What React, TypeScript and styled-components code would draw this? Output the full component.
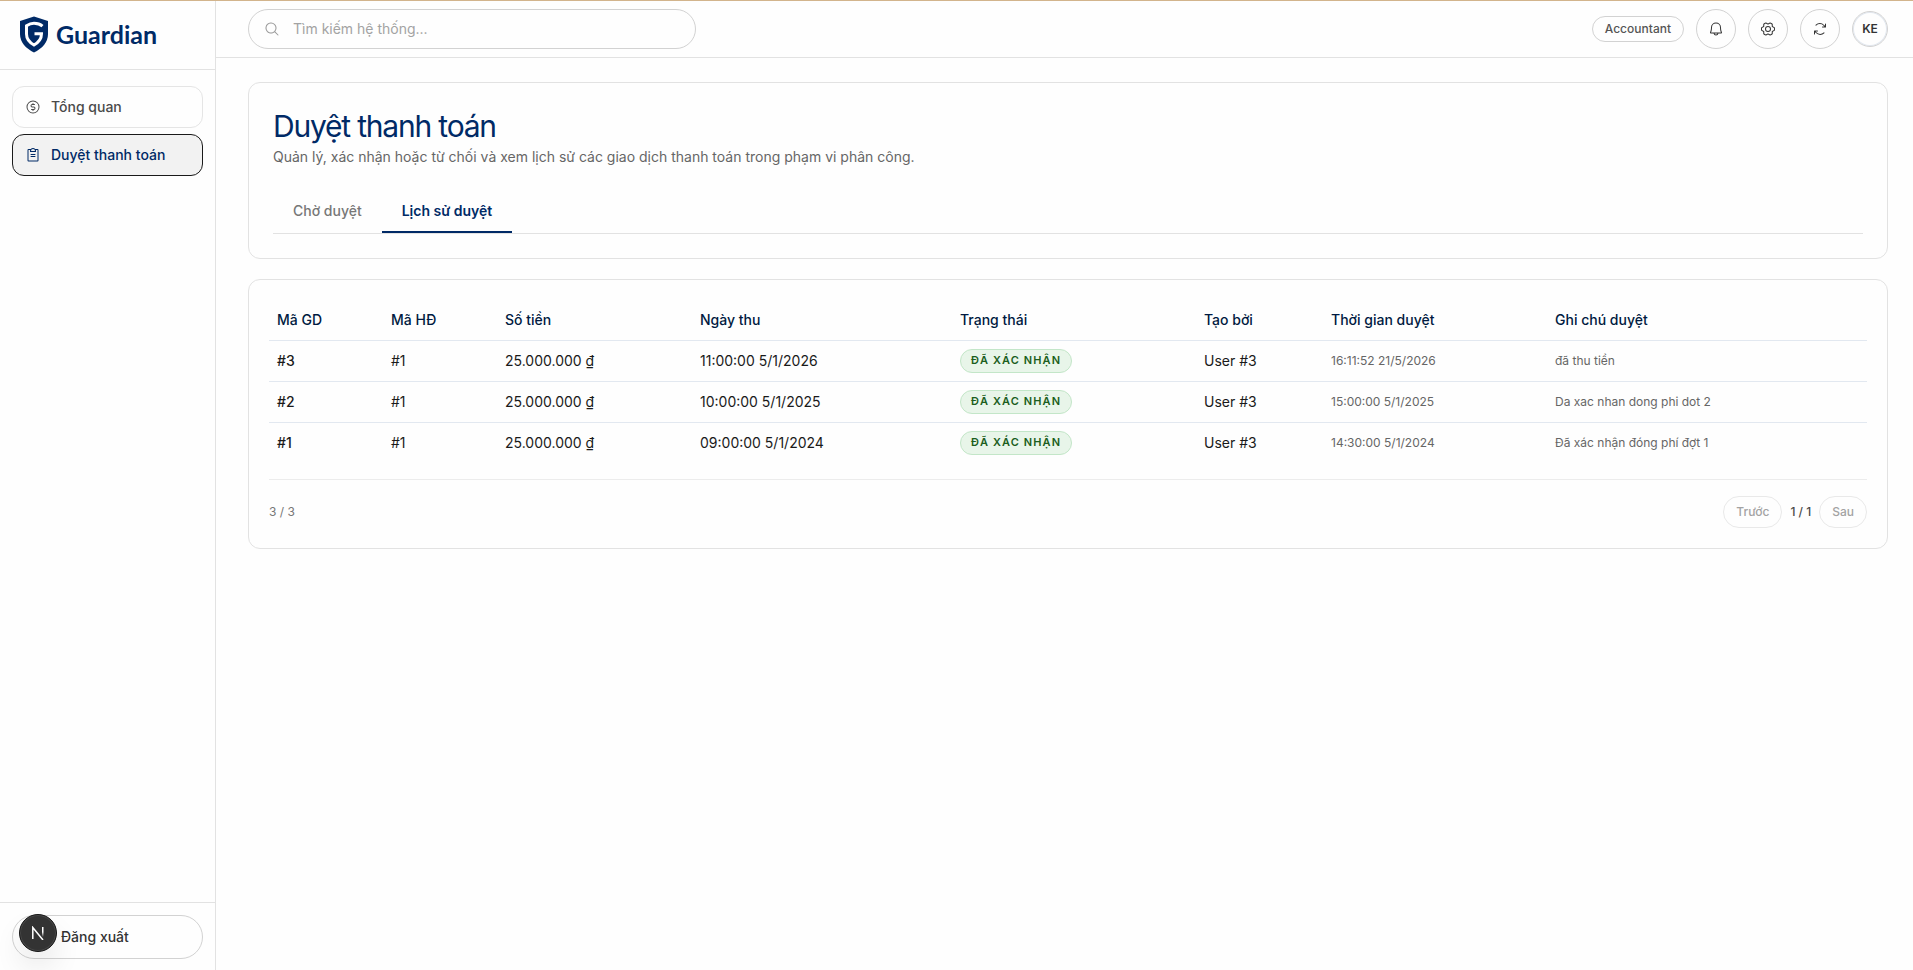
import React from "react";
import styled, { createGlobalStyle, css } from "styled-components";
import {
  PiArrowsClockwise,
  PiBell,
  PiClipboardText,
  PiCurrencyCircleDollar,
  PiGearSix,
  PiMagnifyingGlass,
} from "react-icons/pi";

interface ITransaction {
  id: string;
  contract: string;
  amount: string;
  collectedAt: string;
  status: string;
  createdBy: string;
  reviewedAt: string;
  note: string;
}

const COLUMNS = [
  { label: "Mã GD", width: 114 },
  { label: "Mã HĐ", width: 114 },
  { label: "Số tiền", width: 195 },
  { label: "Ngày thu", width: 260 },
  { label: "Trạng thái", width: 244 },
  { label: "Tạo bởi", width: 127 },
  { label: "Thời gian duyệt", width: 224 },
  { label: "Ghi chú duyệt", width: 320 },
];

const TRANSACTIONS: ITransaction[] = [
  {
    id: "#3",
    contract: "#1",
    amount: "25.000.000 ₫",
    collectedAt: "11:00:00 5/1/2026",
    status: "Đã xác nhận",
    createdBy: "User #3",
    reviewedAt: "16:11:52 21/5/2026",
    note: "đã thu tiền",
  },
  {
    id: "#2",
    contract: "#1",
    amount: "25.000.000 ₫",
    collectedAt: "10:00:00 5/1/2025",
    status: "Đã xác nhận",
    createdBy: "User #3",
    reviewedAt: "15:00:00 5/1/2025",
    note: "Da xac nhan dong phi dot 2",
  },
  {
    id: "#1",
    contract: "#1",
    amount: "25.000.000 ₫",
    collectedAt: "09:00:00 5/1/2024",
    status: "Đã xác nhận",
    createdBy: "User #3",
    reviewedAt: "14:30:00 5/1/2024",
    note: "Đã xác nhận đóng phí đợt 1",
  },
];

const ShieldLogo = () => (
  <svg width="30" height="37" viewBox="0 0 30 37" fill="none">
    <path
      d="M15 0.5 L29 5 V18 C29 26.5 23 32.500 15 36.500 C7 32.500 1 26.500 1 18 V5 Z"
      fill="#002a66"
    />
    <path
      d="M23.500 10.200 C21 8 18 7.300 15 7.300 C11.500 7.300 9.500 8.500 7.500 9.800 V18 C7.500 23.500 10.500 26.500 15 29 C19.500 26.500 22.500 23.500 22.500 17.800 H15.500"
      stroke="#fff"
      strokeWidth="3"
    />
  </svg>
);

const NextMark = () => (
  <svg width="14" height="14" viewBox="0 0 14 14" fill="none">
    <defs>
      <linearGradient id="stem" x1="0" y1="0" x2="0" y2="1">
        <stop offset="0.5" stopColor="#fff" />
        <stop offset="1" stopColor="#fff" stopOpacity="0" />
      </linearGradient>
    </defs>
    <path d="M1.800 13 V1.500 L12 14" stroke="#fff" strokeWidth="1.500" />
    <rect x="11" y="1" width="1.500" height="10" fill="url(#stem)" />
  </svg>
);

export const App = () => {
  return (
    <>
      <GlobalStyle />
      <Shell>
        <Sidebar>
          <Brand>
            <ShieldLogo />
            <BrandName>Guardian</BrandName>
          </Brand>
          <Nav>
            <NavItem>
              <PiCurrencyCircleDollar size={16} />
              Tổng quan
            </NavItem>
            <NavItem $active>
              <PiClipboardText size={16} />
              Duyệt thanh toán
            </NavItem>
          </Nav>
          <SidebarFooter>
            <LogoutButton>Đăng xuất</LogoutButton>
            <DevBadge>
              <NextMark />
            </DevBadge>
          </SidebarFooter>
        </Sidebar>
        <Main>
          <TopBar>
            <SearchBox>
              <PiMagnifyingGlass size={16} />
              <SearchInput placeholder="Tìm kiếm hệ thống..." />
            </SearchBox>
            <Actions>
              <RoleTag>Accountant</RoleTag>
              <IconButton>
                <PiBell size={16} />
              </IconButton>
              <IconButton>
                <PiGearSix size={16} />
              </IconButton>
              <IconButton>
                <PiArrowsClockwise size={16} />
              </IconButton>
              <Avatar>KE</Avatar>
            </Actions>
          </TopBar>
          <Content>
            <HeaderCard>
              <Title>Duyệt thanh toán</Title>
              <Subtitle>
                Quản lý, xác nhận hoặc từ chối và xem lịch sử các giao dịch
                thanh toán trong phạm vi phân công.
              </Subtitle>
              <Tabs>
                <Tab>Chờ duyệt</Tab>
                <Tab $active>Lịch sử duyệt</Tab>
              </Tabs>
            </HeaderCard>
            <TableCard>
              <Table>
                <colgroup>
                  {COLUMNS.map(column => (
                    <Col key={column.label} $width={column.width} />
                  ))}
                </colgroup>
                <thead>
                  <Row>
                    {COLUMNS.map(column => (
                      <HeadCell key={column.label}>{column.label}</HeadCell>
                    ))}
                  </Row>
                </thead>
                <tbody>
                  {TRANSACTIONS.map(item => (
                    <Row key={item.id}>
                      <Cell $strong>{item.id}</Cell>
                      <Cell>{item.contract}</Cell>
                      <Cell>{item.amount}</Cell>
                      <Cell>{item.collectedAt}</Cell>
                      <Cell>
                        <StatusBadge>{item.status}</StatusBadge>
                      </Cell>
                      <Cell>{item.createdBy}</Cell>
                      <Cell $muted>{item.reviewedAt}</Cell>
                      <Cell $muted>{item.note}</Cell>
                    </Row>
                  ))}
                </tbody>
              </Table>
              <TableFooter>
                <span>3 / 3</span>
                <Pager>
                  <PageButton disabled>Trước</PageButton>
                  <PageInfo>1 / 1</PageInfo>
                  <PageButton disabled>Sau</PageButton>
                </Pager>
              </TableFooter>
            </TableCard>
          </Content>
        </Main>
      </Shell>
    </>
  );
};

export default App;

const GlobalStyle = createGlobalStyle`
  * {
    box-sizing: border-box;
  }
  body {
    margin: 0;
    background: #fefefe;
    color: #1a1a1a;
    font-family: Inter, "Noto Sans", sans-serif;
    font-size: 14px;
    line-height: 20px;
  }
  button, input {
    font: inherit;
  }
`;

const Shell = styled.div`
  display: flex;
  height: 100vh;
  border-top: 1px solid #d2b48c;
`;

const Sidebar = styled.aside`
  display: flex;
  flex-direction: column;
  width: 216px;
  flex-shrink: 0;
  border-right: 1px solid #e2e2e2;
`;

const Brand = styled.div`
  display: flex;
  align-items: center;
  gap: 7px;
  height: 69px;
  padding: 0 0 2px 19px;
  border-bottom: 1px solid #e2e2e2;
`;

const BrandName = styled.span`
  color: #002a66;
  font-family: Lato, sans-serif;
  font-size: 25px;
  font-weight: 700;
  line-height: 30px;
`;

const Nav = styled.nav`
  display: flex;
  flex: 1;
  flex-direction: column;
  gap: 6px;
  padding: 16px 12px;
`;

const NavItem = styled.a<{ $active?: boolean }>`
  display: flex;
  align-items: center;
  gap: 10px;
  height: 42px;
  padding: 0 12px;
  border: 1px solid #e5e5e5;
  border-radius: 12px;
  color: #4a4a4a;
  font-weight: 500;
  ${props =>
    props.$active &&
    css`
      border-color: #1a1a1a;
      background: #f2f2f2;
      color: #002a66;
    `}
`;

const SidebarFooter = styled.div`
  position: relative;
  padding: 12px 12px 11px;
  border-top: 1px solid #e2e2e2;
`;

const LogoutButton = styled.button`
  display: flex;
  align-items: center;
  width: 100%;
  height: 44px;
  padding: 0 48px;
  border: 1px solid #d2d2d2;
  border-radius: 22px;
  background: #fefefe;
  color: #333;
  font-weight: 500;
`;

const DevBadge = styled.div`
  position: absolute;
  left: 19px;
  top: 11px;
  display: flex;
  align-items: center;
  justify-content: center;
  width: 38px;
  height: 38px;
  border: 1px solid #171717;
  border-radius: 50%;
  background: #333;
  box-shadow:
    inset 0 0 0 1px #474747,
    0 16px 32px -8px rgba(0, 0, 0, 0.24);
`;

const Main = styled.main`
  display: flex;
  flex: 1;
  flex-direction: column;
  min-width: 0;
`;

const TopBar = styled.header`
  display: flex;
  align-items: center;
  justify-content: space-between;
  height: 57px;
  padding: 0 25px 0 32px;
  border-bottom: 1px solid #e2e2e2;
`;

const SearchBox = styled.label`
  display: flex;
  align-items: center;
  gap: 13px;
  width: 448px;
  height: 40px;
  padding: 0 15px;
  border: 1px solid #d2d2d2;
  border-radius: 20px;
  color: #9a9a9a;
`;

const SearchInput = styled.input`
  flex: 1;
  padding: 0;
  border: 0;
  outline: 0;
  background: transparent;
  &::placeholder {
    color: #a3a3a3;
  }
`;

const Actions = styled.div`
  display: flex;
  align-items: center;
  gap: 12px;
`;

const RoleTag = styled.span`
  display: flex;
  align-items: center;
  height: 26px;
  padding: 0 12px;
  border: 1px solid #d2d2d2;
  border-radius: 13px;
  color: #555;
  font-size: 12px;
  font-weight: 500;
`;

const IconButton = styled.button`
  display: flex;
  align-items: center;
  justify-content: center;
  width: 40px;
  height: 40px;
  padding: 0;
  border: 1px solid #d2d2d2;
  border-radius: 50%;
  background: transparent;
  color: #333;
`;

const Avatar = styled.div`
  display: flex;
  align-items: center;
  justify-content: center;
  width: 36px;
  height: 36px;
  border: 1px solid #d2d2d2;
  border-radius: 50%;
  box-shadow: inset 0 0 0 1px #e2e8f0;
  color: #333;
  font-size: 12px;
  font-weight: 600;
`;

const Content = styled.div`
  display: flex;
  flex-direction: column;
  gap: 20px;
  padding: 24px 25px 24px 32px;
`;

const Card = styled.section`
  border: 1px solid #e2e2e2;
  border-radius: 12px;
`;

const HeaderCard = styled(Card)`
  height: 177px;
  padding: 24px;
`;

const Title = styled.h1`
  margin: 0;
  color: #002a66;
  font-size: 30px;
  font-weight: 400;
  line-height: 38px;
  letter-spacing: -1.2px;
`;

const Subtitle = styled.p`
  margin: 2px 0 0;
  color: #666;
`;

const Tabs = styled.div`
  display: flex;
  height: 44px;
  margin-top: 23px;
  border-bottom: 1px solid #e2e2e2;
`;

const Tab = styled.button<{ $active?: boolean }>`
  padding: 0 20px;
  border: 0;
  border-bottom: 2px solid ${props => (props.$active ? "#002a66" : "transparent")};
  background: transparent;
  color: ${props => (props.$active ? "#002a66" : "#777")};
  font-weight: ${props => (props.$active ? 600 : 500)};
`;

const TableCard = styled(Card)`
  padding: 20px;
`;

const Table = styled.table`
  width: 100%;
  border-collapse: separate;
  border-spacing: 0;
  table-layout: fixed;
`;

const Col = styled.col<{ $width: number }>`
  width: ${props => props.$width}px;
`;

const HeadCell = styled.th`
  height: 41px;
  padding: 0 8px;
  border-bottom: 1px solid #e2e8f0;
  color: #001a41;
  font-weight: 500;
  text-align: left;
`;

const Cell = styled.td<{ $strong?: boolean; $muted?: boolean }>`
  height: 41px;
  padding: 0 8px;
  border-bottom: 1px solid #e2e8f0;
  color: ${props => (props.$muted ? "#666" : "#1a1a1a")};
  font-size: ${props => (props.$muted ? 12 : 14)}px;
  font-weight: ${props => (props.$strong ? 500 : 400)};
`;

const Row = styled.tr`
  tbody &:last-child ${Cell} {
    height: 40px;
    border-bottom: 0;
  }
`;

const StatusBadge = styled.span`
  display: inline-flex;
  height: 24px;
  padding: 0 10px;
  border: 1px solid #c3e6c8;
  border-radius: 12px;
  background: #e8f5e9;
  color: #1b5e20;
  font-size: 11px;
  font-weight: 600;
  line-height: 21px;
  letter-spacing: 1.1px;
  text-transform: uppercase;
  vertical-align: middle;
`;

const TableFooter = styled.div`
  display: flex;
  align-items: center;
  justify-content: space-between;
  margin-top: 16px;
  padding-top: 16px;
  border-top: 1px solid #ececec;
  color: #777;
  font-size: 12px;
`;

const Pager = styled.div`
  display: flex;
  align-items: center;
  gap: 8px;
`;

const PageButton = styled.button`
  height: 32px;
  padding: 0 12px;
  border: 1px solid #e9e9e9;
  border-radius: 16px;
  background: transparent;
  color: #a3a3a3;
  font-weight: 500;
`;

const PageInfo = styled.span`
  color: #4a4a4a;
  font-weight: 500;
`;
